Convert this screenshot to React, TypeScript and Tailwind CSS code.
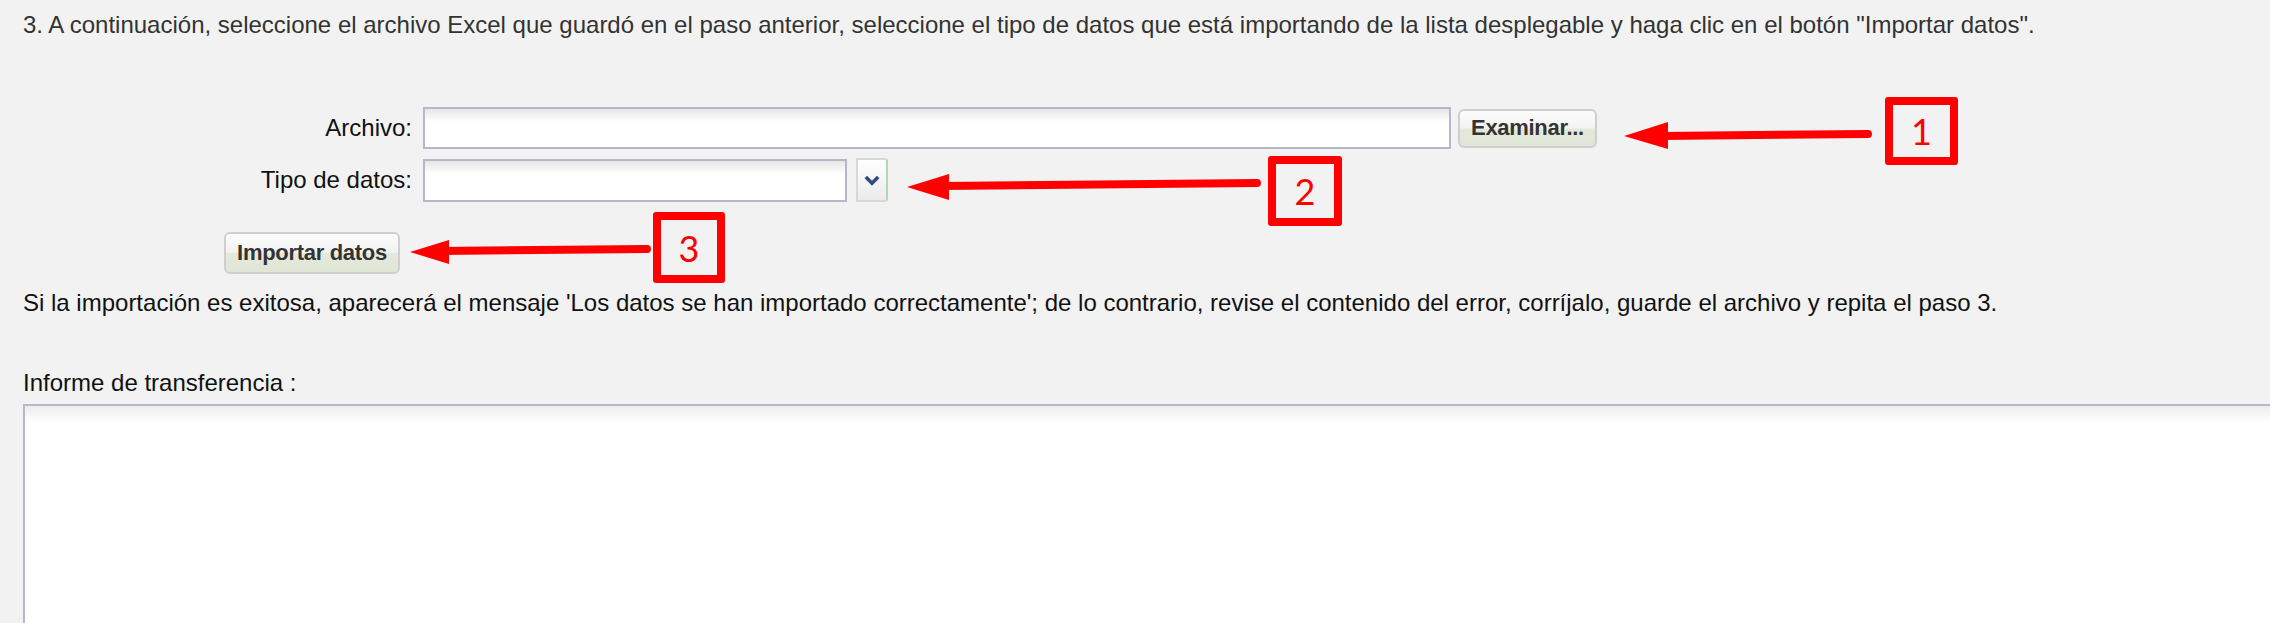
import { type ReactNode } from "react";

type Callout = {
  n: string;
  box: string;
};

const callouts: Callout[] = [
  { n: "1", box: "left-[1885px] top-[97px] w-[73px] h-[68px]" },
  { n: "2", box: "left-[1268px] top-[156px] w-[74px] h-[70px]" },
  { n: "3", box: "left-[653px] top-[212px] w-[72px] h-[71px]" },
];

function ExtButton({ children, className }: { children: ReactNode; className: string }) {
  return (
    <button
      className={
        "rounded-[6px] border-2 border-[#cfcfcf] bg-[linear-gradient(to_bottom,#fdfdfd_0%,#f2f2f2_48%,#e4e9db_52%,#e0e6d6_100%)] text-[22px] font-bold text-[#333] tracking-[-0.3px] " +
        className
      }
    >
      {children}
    </button>
  );
}

function Arrows() {
  return (
    <svg className="absolute left-0 top-0 pointer-events-none" width="2270" height="623">
      <g stroke="#f00" strokeWidth="8" strokeLinecap="round" fill="#f00">
        <line x1="1868" y1="134" x2="1660" y2="136" />
        <line x1="1257" y1="183" x2="940" y2="186" />
        <line x1="647" y1="249" x2="440" y2="251" />
      </g>
      <g fill="#f00">
        <polygon points="1624,136 1668,122 1668,149" />
        <polygon points="907,187 949,174 949,200" />
        <polygon points="410,252 449,240 449,264" />
      </g>
    </svg>
  );
}

export default function App() {
  return (
    <div className="relative w-[2270px] h-[623px] overflow-hidden bg-[#f2f2f2] font-['Liberation_Sans',Arial,sans-serif] text-[24px] leading-[28px]">
      <div className="pl-[23px] pt-[11px]">
        <p className="text-[#333]">
          3. A continuación, seleccione el archivo Excel que guardó en el paso anterior, seleccione el tipo de datos que está importando de la lista desplegable y haga clic en el botón "Importar datos".
        </p>

        <div className="mt-[68px] flex flex-col gap-[9px] text-[#111]">
          <div className="flex items-center">
            <label className="w-[389px] text-right">Archivo:</label>
            <div className="ml-[11px] w-[1028px] h-[42px] border-2 border-[#b5b8c8] bg-[linear-gradient(to_bottom,#e6e6e6,#ffffff_13px)]" />
            <ExtButton className="ml-[7px] w-[139px] h-[39px]">Examinar...</ExtButton>
          </div>
          <div className="flex items-center">
            <label className="w-[389px] text-right">Tipo de datos:</label>
            <div className="ml-[11px] w-[424px] h-[43px] border-2 border-[#b5b8c8] bg-[linear-gradient(to_bottom,#e6e6e6,#ffffff_13px)]" />
            <div className="ml-[9px] w-[32px] h-[44px] flex items-center justify-center rounded-r-[3px] border-2 border-[#d6dad6] border-r-[#b3d6b3] bg-[linear-gradient(to_bottom,#ffffff,#ebebeb)]">
              <svg width="16" height="11" viewBox="0 0 16 11">
                <path d="M1.8 2 L8 8.2 L14.2 2" fill="none" stroke="#2f4e7e" strokeWidth="3.6" />
              </svg>
            </div>
          </div>
        </div>

        <ExtButton className="mt-[30px] ml-[201px] w-[176px] h-[42px]">Importar datos</ExtButton>

        <p className="mt-[15px] text-[#111]">
          Si la importación es exitosa, aparecerá el mensaje 'Los datos se han importado correctamente'; de lo contrario, revise el contenido del error, corríjalo, guarde el archivo y repita el paso 3.
        </p>

        <p className="mt-[52px] text-[#111]">Informe de transferencia :</p>

        <div className="mt-[7px] w-[2260px] h-[300px] border-2 border-[#b5b8c8] bg-[linear-gradient(to_bottom,#ececec,#ffffff_16px)]" />
      </div>

      <Arrows />

      {callouts.map((c) => (
        <div
          key={c.n}
          className={
            "absolute flex items-center justify-center rounded-[3px] border-[8px] border-[#f00] text-[#f00] text-[36px] leading-none font-['Lato','Open_Sans',sans-serif] " +
            c.box
          }
        >
          {c.n}
        </div>
      ))}
    </div>
  );
}
